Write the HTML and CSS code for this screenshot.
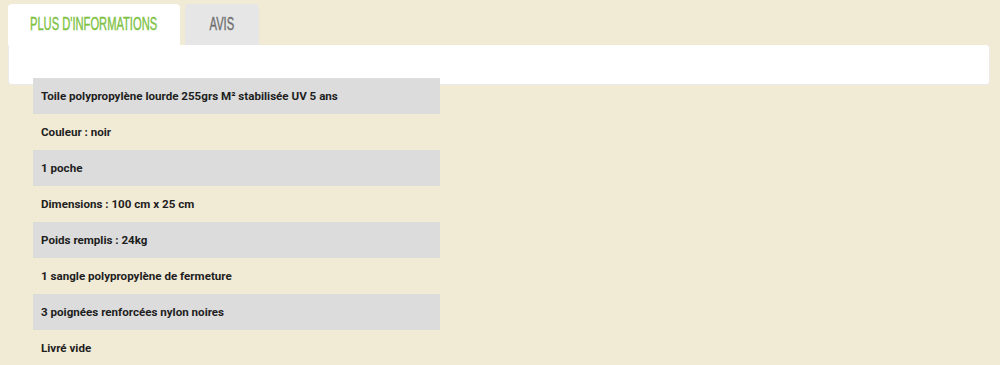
FILE: index.html
```html
<!DOCTYPE html>
<html lang="fr">
<head>
  <meta charset="UTF-8">
  <meta name="viewport" content="width=device-width, initial-scale=1.0">
  <title>Fiche produit</title>
  <link rel="stylesheet" href="styles.css">
</head>
<body>

<div class="tabs">
  <div class="tab tab-active"><span class="tab-label">PLUS D'INFORMATIONS</span></div>
  <div class="tab"><span class="tab-label">AVIS</span></div>
</div>

<div class="tab-panel"></div>

<table class="infos">
  <tr class="odd"><td>Toile polypropylène lourde 255grs M² stabilisée UV 5 ans</td></tr>
  <tr><td>Couleur : noir</td></tr>
  <tr class="odd"><td>1 poche</td></tr>
  <tr><td>Dimensions : 100 cm x 25 cm</td></tr>
  <tr class="odd"><td>Poids remplis : 24kg</td></tr>
  <tr><td>1 sangle polypropylène de fermeture</td></tr>
  <tr class="odd"><td>3 poignées renforcées nylon noires</td></tr>
  <tr><td>Livré vide</td></tr>
</table>

</body>
</html>
```

FILE: styles.css
```css
body {
  margin: 0;
  background-color: #f1ead5;
  font-family: Roboto, "Liberation Sans", sans-serif;
}

.tabs {
  display: flex;
  gap: 5px;
  padding: 4px 0 0 8px;
}

.tab {
  height: 41px;
  display: flex;
  align-items: center;
  justify-content: center;
  background-color: #e6e6e6;
  border-radius: 4px 4px 0 0;
  color: #6f6f6f;
  width: 74px;
}

.tab-active {
  width: 172px;
  background-color: #fff;
  color: #7dc242;
}

.tab-label {
  font-family: "Liberation Sans Narrow", "Liberation Sans", sans-serif;
  font-size: 18px;
  white-space: nowrap;
  display: inline-block;
  transform: scaleX(0.62);
  -webkit-text-stroke: 0.4px currentColor;
}

.tab-panel {
  margin: 0 10px 0 8px;
  height: 39px;
  background-color: #fff;
  border: 1px solid #ebebeb;
  border-top: none;
  border-radius: 0 4px 4px 4px;
}

.infos {
  margin: -7px 0 0 33px;
  width: 407px;
  border-collapse: collapse;
}

.infos td {
  height: 36px;
  padding: 0 8px;
  font-size: 11.6px;
  font-weight: bold;
  color: #1e1e1e;
}

.infos .odd td {
  background-color: #dcdcdc;
}
```
